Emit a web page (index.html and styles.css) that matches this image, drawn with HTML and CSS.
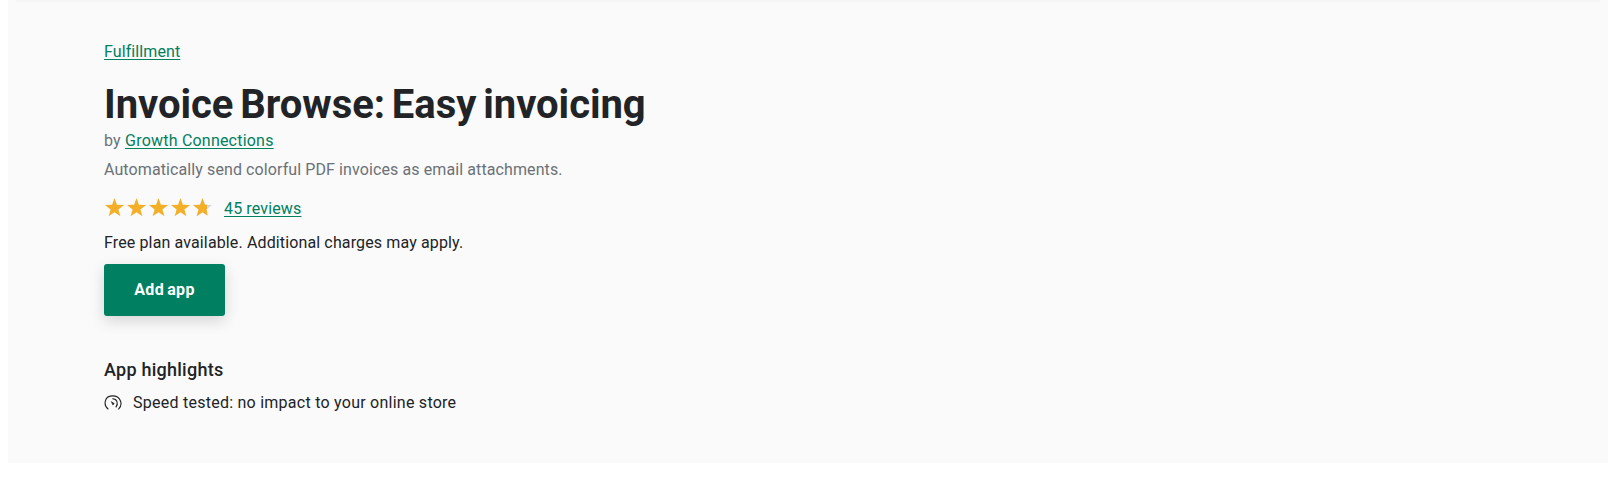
FILE: index.html
```html
<!DOCTYPE html>
<html lang="en">
<head>
<meta charset="utf-8">
<title>Invoice Browse: Easy invoicing</title>
<link rel="stylesheet" href="styles.css">
</head>
<body>
<main class="hero">
  <nav class="category"><a href="#">Fulfillment</a></nav>
  <h1 class="title">Invoice Browse: Easy invoicing</h1>
  <p class="author">by <a href="#">Growth Connections</a></p>
  <p class="tagline">Automatically send colorful PDF invoices as email attachments.</p>
  <div class="rating">
    <svg class="stars" width="110" height="20" viewBox="0 0 110 20" role="img" aria-label="4.7 of 5 stars">
      <defs>
        <path id="star" d="M9.5 0 11.9 6.8 19.1 7 13.4 11.4 15.4 18.3 9.5 14.2 3.600 18.3 5.600 11.4 0 7 7.1 6.8Z"/>
        <clipPath id="filled"><rect width="102" height="20"/></clipPath>
      </defs>
      <use href="#star" x="88" fill="#d5d9df"/>
      <g fill="#f4af29" clip-path="url(#filled)">
        <use href="#star"/><use href="#star" x="22"/><use href="#star" x="44"/><use href="#star" x="66"/><use href="#star" x="88"/>
      </g>
    </svg>
    <a class="reviews" href="#">45 reviews</a>
  </div>
  <p class="pricing">Free plan available. Additional charges may apply.</p>
  <button class="add">Add app</button>
  <h2 class="subtitle">App highlights</h2>
  <div class="highlight">
    <svg class="gauge" width="18" height="16" viewBox="0 0 18 16" fill="none" stroke="#212326" stroke-width="1.1">
      <path d="M4.3 14.3C-.8 10.7.1 1.2 8 .9c8.900-.3 11.400 8.600 6.400 13.500"/>
      <path d="M8.300 3.700c4.900-.2 6.400 5 3.500 8.700"/>
      <path d="M7.300 6.600 10.300 8.600 8.800 10.100Z" fill="#212326" stroke-width=".5"/>
    </svg>
    <span>Speed tested: no impact to your online store</span>
  </div>
</main>
</body>
</html>
```
FILE: styles.css
```css
* { box-sizing: border-box; }
body {
  margin: 0;
  background: #fff;
  color: #212326;
  font: 400 16px/24px Roboto, "Liberation Sans", sans-serif;
}
h1, h2, p { margin: 0; }
a {
  color: #008060;
  text-decoration: underline;
  text-decoration-thickness: 1px;
  text-underline-offset: 2px;
}
.hero {
  height: 463px;
  margin: 0 10px 0 8px;
  padding: 40px 96px 0;
  background:
    linear-gradient(#f3f3f3, #fafafa) 8px 0 / calc(100% - 16px) 3px no-repeat,
    #fafafa;
}
.category { letter-spacing: .1px; }
.title {
  margin-top: 17px;
  font-size: 40px;
  font-weight: 700;
  line-height: 48px;
  letter-spacing: -.04px;
  word-spacing: -3px;
}
.author { color: #6b7177; letter-spacing: .21px; }
.tagline { margin-top: 5px; color: #6b7177; letter-spacing: .1px; }
.rating { display: flex; margin-top: 15px; }
.stars { margin: 1px 9px 0 1px; }
.reviews { letter-spacing: .14px; }
.pricing { margin-top: 10px; letter-spacing: .13px; }
.add {
  display: block;
  width: 121px;
  height: 52px;
  margin-top: 9px;
  padding: 0;
  border: 0;
  border-radius: 3px;
  background: #008060;
  box-shadow: 0 5px 15px rgba(0, 0, 0, .15);
  color: #fff;
  font: 700 16px/24px Roboto, sans-serif;
  letter-spacing: .3px;
  word-spacing: -1px;
}
.subtitle {
  margin-top: 42px;
  font-size: 18px;
  font-weight: 500;
  line-height: 24px;
  letter-spacing: .25px;
}
.highlight { display: flex; margin-top: 9px; letter-spacing: .25px; }
.gauge { margin: 4px 11px 0 0; }
```
